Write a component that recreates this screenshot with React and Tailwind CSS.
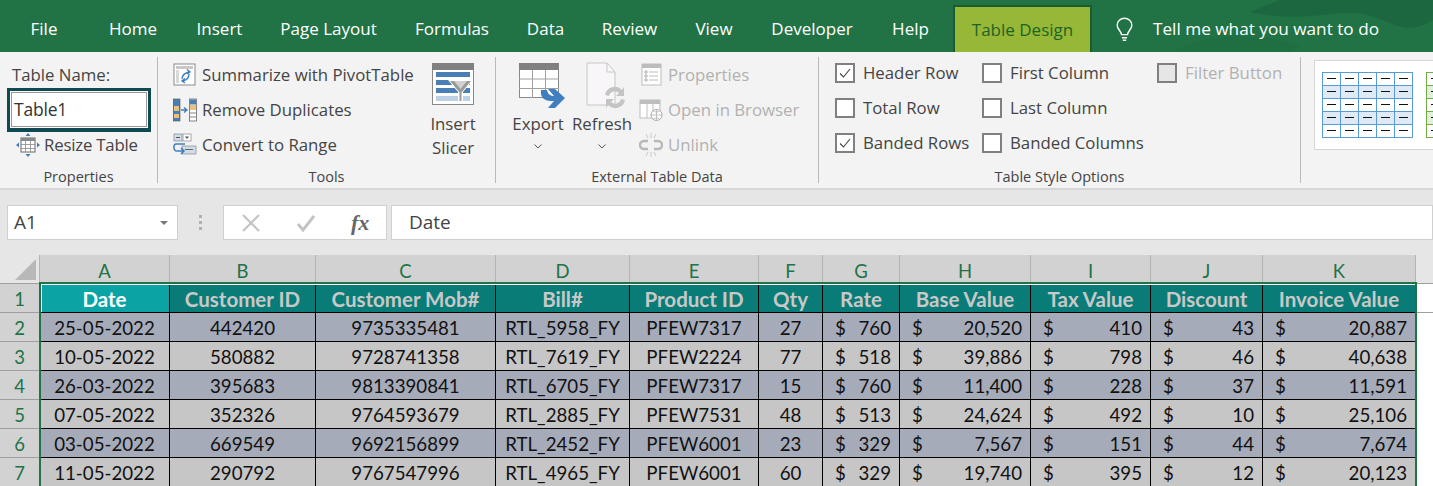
const TABS = [
  ['File', 88],
  ['Home', 90],
  ['Insert', 83],
  ['Page Layout', 135],
  ['Formulas', 112],
  ['Data', 75],
  ['Review', 93],
  ['View', 76],
  ['Developer', 120],
  ['Help', 77],
];

const COLS = [
  ['A', 'Date', 130],
  ['B', 'Customer ID', 146],
  ['C', 'Customer Mob#', 180],
  ['D', 'Bill#', 134],
  ['E', 'Product ID', 129],
  ['F', 'Qty', 64],
  ['G', 'Rate', 77],
  ['H', 'Base Value', 131],
  ['I', 'Tax Value', 120],
  ['J', 'Discount', 112],
  ['K', 'Invoice Value', 153],
];

const ROWS = [
  ['25-05-2022', '442420', '9735335481', 'RTL_5958_FY', 'PFEW7317', '27', '760', '20,520', '410', '43', '20,887'],
  ['10-05-2022', '580882', '9728741358', 'RTL_7619_FY', 'PFEW2224', '77', '518', '39,886', '798', '46', '40,638'],
  ['26-03-2022', '395683', '9813390841', 'RTL_6705_FY', 'PFEW7317', '15', '760', '11,400', '228', '37', '11,591'],
  ['07-05-2022', '352326', '9764593679', 'RTL_2885_FY', 'PFEW7531', '48', '513', '24,624', '492', '10', '25,106'],
  ['03-05-2022', '669549', '9692156899', 'RTL_2452_FY', 'PFEW6001', '23', '329', '7,567', '151', '44', '7,674'],
  ['11-05-2022', '290792', '9767547996', 'RTL_4965_FY', 'PFEW6001', '60', '329', '19,740', '395', '12', '20,123'],
];

const ui = "font-['Open_Sans',sans-serif]";
const sheet = "font-['Lato',sans-serif]";

function Group({ label, width, children }) {
  return (
    <div style={{ width }} className="flex flex-col h-[126px] mt-[5px] border-r border-[#b9b9b9] shrink-0">
      <div className="flex-1 min-h-0 flex">{children}</div>
      <div className="h-3 leading-3 text-center text-[14.5px] text-[#444]">{label}</div>
    </div>
  );
}

function Row({ icon, children, muted }) {
  return (
    <div className={`h-[35px] flex items-center gap-[5px] whitespace-nowrap text-[16.8px] ${muted ? 'text-[#b1b1b1]' : 'text-[#444]'}`}>
      <span className="w-[24px] h-[24px] shrink-0">{icon}</span>
      {children}
    </div>
  );
}

function Check({ label, checked, disabled, width }) {
  return (
    <div style={{ width }} className={`h-[35px] flex items-center gap-[8px] whitespace-nowrap text-[16.8px] ${disabled ? 'text-[#b1b1b1]' : 'text-[#444]'}`}>
      <span className={`w-[20px] h-[20px] border-2 border-[#808080] flex items-center justify-center ${disabled ? 'bg-[#e6e6e6]' : 'bg-white'}`}>
        {checked && (
          <svg width="14" height="14" viewBox="0 0 14 14" fill="none" stroke="#444" strokeWidth="1.1">
            <path d="M2 7.5 5.5 11 12 3" />
          </svg>
        )}
      </span>
      {label}
    </div>
  );
}

const PivotIcon = () => (
  <svg viewBox="0 0 24 24" className="w-6 h-6">
    <rect x="1" y="1" width="21" height="21" fill="#fff" stroke="#8a8a8a" />
    <rect x="3" y="3" width="17" height="3" fill="#c8c8c8" />
    <rect x="3" y="7" width="3" height="13" fill="#d8d8d8" />
    <path d="M9 16c0-4 3-6 7-7M14 6.5 17 9l-3 2M16 11c0 4-2 6-6 7M12 15.5 9 18l3 2" fill="none" stroke="#3f7fbf" strokeWidth="1.4" />
  </svg>
);

const DuplicatesIcon = () => (
  <svg viewBox="0 0 24 24" className="w-6 h-6">
    <rect x="0" y="1" width="7" height="22" fill="#4a7fb5" stroke="#555" strokeWidth=".6" />
    <rect x="1" y="8" width="5" height="5" fill="#e9c27d" />
    <rect x="1" y="16" width="5" height="4" fill="#e9c27d" />
    <path d="M8 12h5M11 9.5 14 12l-3 2.5" fill="none" stroke="#3f7fbf" strokeWidth="1.4" />
    <rect x="16.5" y="1" width="7" height="22" fill="#fff" stroke="#666" strokeWidth=".8" />
    <rect x="17" y="1.5" width="6" height="5" fill="#4a7fb5" />
    <rect x="17" y="7" width="6" height="5" fill="#e9c27d" />
    <path d="M17 15h6M17 19h6" stroke="#666" strokeWidth=".8" />
  </svg>
);

const ConvertIcon = () => (
  <svg viewBox="0 0 24 24" className="w-6 h-6">
    <rect x="1" y="1" width="8" height="7" fill="#cfdcea" stroke="#888" strokeWidth=".7" />
    <path d="M3 4.5h4" stroke="#555" />
    <rect x="10" y="1" width="8" height="7" fill="#fff" stroke="#888" strokeWidth=".7" />
    <path d="M12 3.5h4L14 6z" fill="#555" />
    <rect x="9" y="13" width="14" height="8" fill="#cfdcea" stroke="#888" strokeWidth=".7" />
    <path d="M12 16.5h8" stroke="#666" />
    <path d="M12 11H3c-3 0-3 7 1 7h7M8 15l3 3-3 3" fill="none" stroke="#3f7fbf" strokeWidth="1.5" />
  </svg>
);

const ResizeIcon = () => (
  <svg viewBox="0 0 24 24" className="w-6 h-6">
    <rect x="5" y="5" width="14" height="14" fill="#fff" stroke="#666" />
    <rect x="5" y="5" width="14" height="3" fill="#8a8a8a" />
    <path d="M9.5 8v11M14.5 8v11M5 11.5h14M5 15.5h14" stroke="#888" strokeWidth=".8" />
    <path d="M12 0 9.5 3h5zM12 24l-2.5-3h5zM0 12l3-2.5v5zM24 12l-3-2.5v5z" fill="#3f7fbf" />
  </svg>
);

const SlicerIcon = () => (
  <svg viewBox="0 0 42 42" className="w-[42px] h-[42px]">
    <rect x=".5" y=".5" width="41" height="41" fill="#fff" stroke="#8a8a8a" />
    <rect x="0" y="0" width="42" height="7" fill="#808080" />
    <rect x="4" y="9" width="34" height="5" fill="#4a7fb5" />
    <rect x="4" y="17" width="34" height="5" fill="#4a7fb5" />
    <rect x="4" y="25" width="34" height="5" fill="#4a7fb5" />
    <rect x="4" y="33" width="34" height="5" fill="#bcd1e6" />
    <path d="M16 17h25l-10 12v10h-5V29z" fill="#fff" />
    <path d="M18 18h21l-9.5 11.5V38h-2V29.5z" fill="#9a9a9a" />
    <path d="M22 18h13l-6.5 8z" fill="#d0d0d0" />
  </svg>
);

const ExportIcon = () => (
  <svg viewBox="0 0 46 46" className="w-[46px] h-[46px]">
    <rect x=".5" y=".5" width="39" height="34" fill="#fff" stroke="#8a8a8a" />
    <rect x="0" y="0" width="40" height="7" fill="#808080" />
    <path d="M13.5 7v28M26.5 7v28M0 16h40M0 25.5h40" stroke="#a0a0a0" />
    <path d="M22 27h6c1 4 3 6 8 6h-1l-6-7h7l10 9-10 10h-7l6-7h-3c-7 0-11-4-10-11z" fill="#3f7fbf" />
  </svg>
);

const RefreshIcon = () => (
  <svg viewBox="0 0 42 48" className="w-[42px] h-[48px]">
    <path d="M1 1h20l8 9v33H1z" fill="#f8f6f8" stroke="#c8c6c8" />
    <path d="M21 1v9h8" fill="none" stroke="#c8c6c8" />
    <path d="M19 33a10 10 0 0 1 17-5l2-3v9h-8l3-3a6 6 0 0 0-10 3zM39 38a10 10 0 0 1-17 5l-2 3v-9h8l-3 3a6 6 0 0 0 10-3z" fill="#c4c4c4" />
  </svg>
);

const PropsIcon = () => (
  <svg viewBox="0 0 24 24" className="w-6 h-6">
    <rect x="3" y="1" width="19" height="21" fill="#fff" stroke="#bdbdbd" />
    <rect x="3" y="1" width="19" height="4" fill="#bdbdbd" />
    <path d="M10 9h9M10 13h9M10 17h9" stroke="#bdbdbd" />
    <circle cx="7" cy="9" r="1.2" fill="none" stroke="#aaa" />
    <circle cx="7" cy="13" r="1.2" fill="none" stroke="#aaa" />
    <circle cx="7" cy="17" r="1.2" fill="none" stroke="#aaa" />
  </svg>
);

const BrowserIcon = () => (
  <svg viewBox="0 0 24 24" className="w-6 h-6">
    <rect x="1" y="2" width="20" height="18" fill="#fff" stroke="#bdbdbd" />
    <rect x="1" y="2" width="20" height="4" fill="#bdbdbd" />
    <path d="M8 6v14M14 6v14" stroke="#bdbdbd" />
    <circle cx="17.5" cy="17" r="5.5" fill="#fff" stroke="#aaa" />
    <path d="M12 17h11M17.5 11.5v11M14.5 13c2 1.5 4 1.5 6 0M14.5 21c2-1.500 4-1.500 6 0" stroke="#aaa" strokeWidth=".7" fill="none" />
  </svg>
);

const UnlinkIcon = () => (
  <svg viewBox="0 0 24 24" className="w-6 h-6">
    <path d="M9 8H5a4 4 0 0 0 0 8h4M15 8h4a4 4 0 0 1 0 8h-4" fill="none" stroke="#b8b8b8" strokeWidth="2.4" />
    <path d="M7 1l2 4M12 0v5M17 1l-2 4M7 23l2-4M12 24v-5M17 23l-2-4" stroke="#c8c8c8" />
  </svg>
);

const Thumb = ({ stroke, fill }) => {
  const xs = [0, 18, 36, 54, 72];
  const ys = [0, 13, 26, 39, 52];
  return (
    <svg width="92" height="66" viewBox="0 0 92 66" className="shrink-0">
      <rect x="0" y="13.5" width="91" height="13" fill={fill} />
      <rect x="0" y="39.5" width="91" height="13" fill={fill} />
      <rect x=".5" y=".5" width="90" height="65" fill="none" stroke={stroke} />
      {xs.slice(1).map(x => <path key={x} d={`M${x + .5} 0v66`} stroke={stroke} />)}
      {ys.slice(1).map(y => <path key={y} d={`M0 ${y + .5}h91`} stroke={stroke} />)}
      {xs.map(x => ys.map(y => <path key={`${x}-${y}`} d={`M${x + 5} ${y + 6.5}h9`} stroke="#111" />))}
    </svg>
  );
};

function Cell({ col, value, band }) {
  const money = col >= 6;
  return (
    <div className={`flex items-center h-full pt-[3px] border-r border-b border-black text-[#111] text-[18.7px] ${band ? 'bg-[#a6abb9]' : 'bg-[#c6c6c6]'} ${money ? 'justify-between pl-[12px] pr-[8px]' : 'justify-center'}`}>
      {money && <span>$</span>}
      <span>{value}</span>
    </div>
  );
}

export default function App() {
  return (
    <div className={`w-[1433px] h-[486px] overflow-hidden bg-white ${ui}`}>
      {/* title tabs */}
      <div className="relative h-[52px] bg-[#217346] flex text-white text-[17px] overflow-hidden">
        <svg className="absolute left-[1170px] top-0" width="263" height="52" viewBox="0 0 263 52">
          <path d="M80 12C110 0 120-6 130 0h133v20c-30 18-40 0-70-6-30-5-60 10-113-2z" fill="#1c6740" />
          <path d="M0 52c40-20 90-20 130-6l-10 6z" fill="#1f6f43" />
        </svg>
        {TABS.map(([name, w]) => (
          <div key={name} style={{ width: w }} className="flex items-center justify-center pt-[5px] shrink-0">{name}</div>
        ))}
        <div className="relative ml-[4px] mt-[5px] w-[139px] h-[47px] flex items-center justify-center bg-[#96b836] text-[#1d6327] border-x-2 border-t-2 border-[#185c30]">
          Table Design
        </div>
        <div className="relative ml-[23px] flex items-center gap-[19px] pt-[6px] text-[17.2px]">
          <svg width="19" height="25" viewBox="0 0 22 28" fill="none" stroke="#fff" strokeWidth="1.6">
            <path d="M7.5 20c0-4-5-6-5-11a8.5 8 0 0 1 17 0c0 5-5 7-5 11z" />
            <path d="M8 23.5h6M9 26.5h4" />
          </svg>
          <span className="whitespace-nowrap">Tell me what you want to do</span>
        </div>
      </div>

      {/* ribbon */}
      <div className="h-[138px] flex bg-[#f3f3f3] border-b-2 border-[#d6d6d6] overflow-hidden">
        <Group label="Properties" width={158}>
          <div className="w-full pt-[4px]">
            <div className="pl-[12px] h-[27px] flex items-center text-[16.8px] text-[#444]">Table Name:</div>
            <div className="ml-[7px] w-[144px] h-[44px] border-[3px] border-b-4 border-[#0f4a52] bg-white p-px">
              <div className="h-full border border-[#9a9a9a] flex items-center pl-[2px] text-[17.5px] tracking-[-0.2px] text-[#333]">Table1</div>
            </div>
            <div className="pl-[16px]">
              <div className="h-[25px] flex items-center gap-[4px] text-[16.8px] tracking-[-0.2px] text-[#444]">
                <span className="w-6 h-6"><ResizeIcon /></span>Resize Table
              </div>
            </div>
          </div>
        </Group>

        <Group label="Tools" width={338}>
          <div className="pl-[15px] w-[265px]">
            <Row icon={<PivotIcon />}>Summarize with PivotTable</Row>
            <Row icon={<DuplicatesIcon />}>Remove Duplicates</Row>
            <Row icon={<ConvertIcon />}>Convert to Range</Row>
          </div>
          <div className="w-[60px] flex flex-col items-center pt-[6px] text-[16.8px] text-[#444] leading-[24px]">
            <SlicerIcon />
            <div className="mt-[7px]">Insert</div>
            <div>Slicer</div>
          </div>
        </Group>

        <Group label="External Table Data" width={323}>
          <div className="w-[72px] pl-[12px] flex flex-col items-center pt-[6px] text-[16.8px] text-[#444] leading-[24px]">
            <div className="h-[49px] ml-[8px]"><ExportIcon /></div>
            <div>Export</div>
            <svg className="mt-[8px]" width="8" height="5" viewBox="0 0 8 5" fill="none" stroke="#555"><path d="M.5.5 4 4 7.5.5" /></svg>
          </div>
          <div className="w-[68px] flex flex-col items-center pt-[5px] text-[16.8px] text-[#444] leading-[24px]">
            <div className="h-[50px] ml-[10px]"><RefreshIcon /></div>
            <div>Refresh</div>
            <svg className="mt-[8px]" width="8" height="5" viewBox="0 0 8 5" fill="none" stroke="#555"><path d="M.5.5 4 4 7.5.5" /></svg>
          </div>
          <div className="pl-[3px]">
            <Row muted icon={<PropsIcon />}>Properties</Row>
            <Row muted icon={<BrowserIcon />}>Open in Browser</Row>
            <Row muted icon={<UnlinkIcon />}>Unlink</Row>
          </div>
        </Group>

        <Group label="Table Style Options" width={482}>
          <div className="pl-[16px] mt-[-2px] flex">
            <div>
              <Check width={147} label="Header Row" checked />
              <Check width={147} label="Total Row" />
              <Check width={147} label="Banded Rows" checked />
            </div>
            <div>
              <Check width={175} label="First Column" />
              <Check width={175} label="Last Column" />
              <Check width={175} label="Banded Columns" />
            </div>
            <div>
              <Check width={130} label="Filter Button" disabled />
            </div>
          </div>
        </Group>

        <div className="ml-[13px] mt-[8px] h-[90px] grow border border-r-0 border-[#d6d6d6] bg-white flex gap-[12px] pl-[7px] pt-[11px] overflow-hidden">
          <Thumb stroke="#5b9bd5" fill="#deeaf6" />
          <Thumb stroke="#70ad47" fill="#e2efd9" />
        </div>
      </div>

      {/* formula bar */}
      <div className="h-[65px] bg-[#e6e6e6] flex items-start pt-[15px] text-[19px] text-[#444]">
        <div className="ml-[7px] w-[171px] h-[35px] bg-white border border-[#d0d0d0] flex items-center justify-between pl-[6px] pr-[9px]">
          A1
          <span className="w-0 h-0 border-x-[4px] border-x-transparent border-t-[4px] border-t-[#777]" />
        </div>
        <div className="w-[45px] h-[35px] flex flex-col items-center justify-center gap-[3px]">
          <span className="w-[3px] h-[3px] bg-[#b0b0b0]" />
          <span className="w-[3px] h-[3px] bg-[#b0b0b0]" />
          <span className="w-[3px] h-[3px] bg-[#b0b0b0]" />
        </div>
        <div className="w-[164px] h-[35px] bg-white border border-[#d0d0d0] flex items-center">
          <svg className="ml-[18px]" width="18" height="18" viewBox="0 0 18 18" stroke="#c4c4c4" strokeWidth="2.2"><path d="M1 1l16 16M17 1 1 17" /></svg>
          <svg className="ml-[36px]" width="20" height="18" viewBox="0 0 20 18" fill="none" stroke="#c4c4c4" strokeWidth="3"><path d="M2 10l5 6L18 2" /></svg>
          <span className="ml-[35px] font-['Liberation_Serif',serif] italic font-bold text-[22px] text-[#666]">fx</span>
        </div>
        <div className="ml-[4px] grow h-[35px] bg-white border border-[#d0d0d0] flex items-center pl-[17px]">Date</div>
      </div>

      {/* sheet */}
      <div className={`relative ${sheet}`}>
        <div className="flex h-[29px] bg-[#e6e6e6] border-b border-[#9f9f9f]">
          <div className="relative w-[40px] bg-[#e6e6e6] border-r border-[#b5b5b5] shrink-0">
            <span className="absolute right-[3px] bottom-[3px] w-0 h-0 border-l-[21px] border-l-transparent border-b-[21px] border-b-[#b8b8b8]" />
          </div>
          {COLS.map(([letter, , w]) => (
            <div key={letter} style={{ width: w }} className="shrink-0 bg-[#d2d2d2] border-r border-[#b5b5b5] flex items-center justify-center pt-[4px] text-[#217346] text-[18.5px] leading-[24px]">{letter}</div>
          ))}
        </div>

        <div className="flex h-[29px]">
          <div className="w-[40px] shrink-0 bg-[#d2d2d2] border-r border-b border-[#9f9f9f] flex items-center justify-center pt-[3px] text-[#217346] text-[18.5px]">1</div>
          {COLS.map(([letter, title, w], i) => (
            <div key={letter} style={{ width: w }} className={`shrink-0 flex items-center justify-center pt-[3px] font-bold text-[20.5px] whitespace-nowrap border-r border-b border-black ${i === 0 ? 'bg-[#0ba3a3] text-white' : 'bg-[#0a7c78] text-[#c8c8c8]'}`}>{title}</div>
          ))}
          <div className="grow border-b border-[#9f9f9f]" />
        </div>

        {ROWS.map((row, r) => (
          <div key={r} className="flex h-[29px]">
            <div className="w-[40px] shrink-0 bg-[#d2d2d2] border-r border-b border-[#9f9f9f] flex items-center justify-center pt-[3px] text-[#217346] text-[18.5px]">{r + 2}</div>
            {row.map((value, i) => (
              <div key={i} style={{ width: COLS[i][2] }} className="shrink-0 h-full">
                <Cell col={i} value={value} band={r % 2 === 0} />
              </div>
            ))}
          </div>
        ))}

        {/* table selection outline */}
        <div className="absolute left-[39px] top-[27px] w-[1378px] h-[240px] border-2 border-b-0 border-[#217346] pointer-events-none" />
        <div className="absolute left-[41px] top-[29px] w-[1374px] h-px bg-white pointer-events-none" />
        <div className="absolute left-[41px] top-[29px] w-px h-[28px] bg-white pointer-events-none" />
      </div>
    </div>
  );
}
